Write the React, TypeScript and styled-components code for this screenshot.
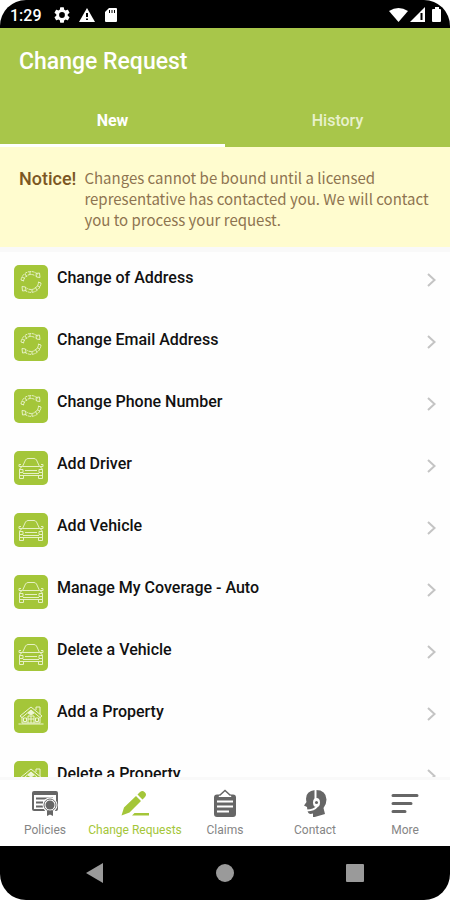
import React, { useState } from "react";
import styled, { createGlobalStyle } from "styled-components";

const green = "#a8c64a";
const iconGreen = "#a4c639";

const GlobalStyle = createGlobalStyle`
  *, *::before, *::after { box-sizing: border-box; }
  body { margin: 0; background: #fff; font-family: Roboto, "Liberation Sans", sans-serif; }
  button { font: inherit; border: 0; padding: 0; background: none; cursor: pointer; }
  a { color: inherit; text-decoration: none; }
  svg { display: block; flex: none; }
`;

const Screen = styled.div`
  display: flex;
  flex-direction: column;
  height: 100vh;
  overflow: hidden;
  border-radius: 26px;
  background: #fefefe;
`;

const StatusBar = styled.div`
  display: flex;
  align-items: center;
  justify-content: space-between;
  flex: none;
  height: 28px;
  padding: 2px 6px 0 10px;
  background: #000;
  color: #fff;
  font-size: 16px;
  font-weight: 500;
`;

const StatusGroup = styled.div<{ $gap: number }>`
  display: flex;
  align-items: center;
  gap: ${(p) => p.$gap}px;
`;

const Clock = styled.span`
  margin-right: 3px;
`;

const Header = styled.header`
  flex: none;
  background: ${green};
  color: #fff;
`;

const Title = styled.h1`
  margin: 0;
  padding: 18px 19px 0;
  font-size: 23px;
  line-height: 32px;
  font-weight: 500;
`;

const Tabs = styled.div`
  display: grid;
  grid-template-columns: 1fr 1fr;
  margin-top: 16px;
`;

const Tab = styled.button<{ $active: boolean }>`
  height: 53px;
  padding-top: 2px;
  border-bottom: 3px solid ${(p) => (p.$active ? "#fff" : green)};
  color: ${(p) => (p.$active ? "#fff" : "#e8f1cd")};
  font-size: 16px;
  font-weight: ${(p) => (p.$active ? 700 : 500)};
`;

const Notice = styled.section`
  display: flex;
  flex: none;
  gap: 8px;
  padding: 20px 19px 17px;
  background: #fffccf;
  border-bottom: 5px solid #f9f9f9;
`;

const NoticeLabel = styled.strong`
  color: #7c5723;
  font-size: 18px;
  line-height: 24px;
  font-weight: 500;
`;

const NoticeText = styled.p`
  margin: 0;
  color: #8e7450;
  font-family: "Noto Sans CJK SC", sans-serif;
  font-size: 15px;
  line-height: 21px;
`;

const List = styled.ul`
  flex: 1;
  min-height: 0;
  margin: 0;
  padding: 0;
  overflow: hidden;
  list-style: none;
`;

const Row = styled.button`
  display: flex;
  align-items: flex-start;
  width: 100%;
  height: 62px;
  padding: 13px 12px 0 14px;
  text-align: left;
`;

const Tile = styled.span`
  display: grid;
  place-items: center;
  flex: none;
  width: 34px;
  height: 34px;
  margin-right: 9px;
  border-radius: 5px;
  background: ${iconGreen};
`;

const RowLabel = styled.span`
  flex: 1;
  color: #111;
  font-size: 16px;
  line-height: 26px;
  font-weight: 500;
`;

const ChevronBox = styled.span`
  padding-top: 8px;
`;

const BottomNav = styled.nav`
  display: grid;
  grid-template-columns: repeat(5, 1fr);
  flex: none;
  height: 69px;
  border-top: 3px solid #f9f9f9;
  background: #fff;
`;

const NavItem = styled.a<{ $active: boolean }>`
  display: flex;
  flex-direction: column;
  align-items: center;
  min-width: 0;
  padding-top: 9px;
  gap: 5px;
  color: ${(p) => (p.$active ? iconGreen : "#666")};
`;

const NavLabel = styled.span<{ $active: boolean }>`
  color: ${(p) => (p.$active ? iconGreen : "#858585")};
  font-size: 12px;
  line-height: 16px;
  white-space: nowrap;
`;

const SystemBar = styled.div`
  display: flex;
  align-items: center;
  justify-content: space-around;
  flex: none;
  height: 54px;
  padding: 0 30px;
  background: #000;
`;

const SystemButton = styled.button`
  display: grid;
  place-items: center;
  width: 32px;
  height: 32px;
  color: #9a9a9a;
`;

const CycleIcon = () => (
  <svg width="26" height="26" viewBox="0 0 26 26" fill="none" stroke="#e6f1c4" strokeWidth="1">
    <path d="M3 11A10 10 0 0 1 20 5.500M5.500 12A7.500 7.500 0 0 1 17.500 7" strokeDasharray="3 .7" />
    <path d="M23 14A10 10 0 0 1 6 20.500M20.500 13A7.500 7.500 0 0 1 8.500 19" strokeDasharray="3 .7" />
    <path d="M18 4.500L21.500 4 22 8.500 18.500 8zM8 21.500L4.500 22 4 17.500 7.500 18zM3 11l3 1M23 14l-3-1M4 8l3 1.500M7 5l2 3M12 3v3M22 18l-3-1.500M19 21l-2-3M14 23v-3" />
  </svg>
);

const CarIcon = () => (
  <svg width="26" height="26" viewBox="0 0 26 26" fill="none" stroke="#e6f1c4" strokeWidth="1" strokeLinejoin="round">
    <path d="M4.500 11.500L7.500 5Q8.500 3.500 10 3.500H16Q17.500 3.500 18.500 5L21.500 11.500M3 9.500H1V11.500H4M23 9.500H25V11.500H22" />
    <path d="M4.500 11.500H21.500Q24.500 12.500 24.500 15V23.500H20.500V20.500H5.500V23.500H1.500V15Q1.500 12.500 4.500 11.500zM1.500 14.500H5V17.500H1.500M24.500 14.500H21V17.500H24.500M7 15.500H19M5 18.500H21M1.500 20.500H24.500" />
  </svg>
);

const HouseIcon = () => (
  <svg width="26" height="26" viewBox="0 0 26 26" fill="none" stroke="#edf5d5" strokeWidth="1" strokeLinejoin="round">
    <path d="M2 13L13 4 24 13 22 14.500 13 7 4 14.500zM18 7V4H22V11M4 14V20H22V14M.5 21H25.500M10 20V13H16V20" />
    <path d="M5.500 15H8.500V18.500H5.500zM17.500 15H20.500V18.500H17.500zM13 13V20M10 16H16" />
    <path d="M13 7L16 10 13 12 10 10z" fill="#edf5d5" />
  </svg>
);

const Chevron = () => (
  <svg width="12" height="14" viewBox="0 0 12 14" fill="none" stroke="#c4c4c4" strokeWidth="2">
    <path d="M2 1l6.500 6L2 13" />
  </svg>
);

const PoliciesIcon = () => (
  <svg width="28" height="28" viewBox="0 0 28 28">
    <path d="M3 2H25Q27 2 27 4V20Q27 22 25 22H24V19H25V6H3V20H15L14 22H3Q1 22 1 20V4Q1 2 3 2z" fill="currentColor" />
    <path d="M5 9.500H22M5 13.500H12M5 17.500H12" stroke="currentColor" strokeWidth="2" />
    <circle cx="19" cy="16" r="7.500" fill="#fff" />
    <circle cx="19" cy="16" r="4.500" fill="currentColor" />
    <circle cx="19" cy="16" r="6" fill="none" stroke="currentColor" strokeWidth="1" />
    <path d="M16 22V27L19 25.500 22 27V22z" fill="currentColor" />
  </svg>
);

const PencilIcon = () => (
  <svg width="28" height="28" viewBox="0 0 28 28" fill="currentColor">
    <path d="M.5 26.500L3 18.500 15 7 20 12 8.500 23.500zM16.500 5.500L19 3Q21.500 1 23.500 3L24 3.500Q26 5.500 24 8L21.500 10.500zM13.500 24H28V26.500H11z" />
  </svg>
);

const ClaimsIcon = () => (
  <svg width="28" height="28" viewBox="0 0 28 28" fill="none">
    <path d="M8.500 6.500L14 1.500 19.500 6.500" stroke="currentColor" strokeWidth="1.500" />
    <path d="M6 5.500H9L7.500 8H20.500L19 5.500H22Q25 5.500 25 8.500V25Q25 28 22 28H6Q3 28 3 25V8.500Q3 5.500 6 5.500z" fill="currentColor" />
    <path d="M6 12.500H22M6 17.500H22M6 22.500H18" stroke="#fff" strokeWidth="2" />
  </svg>
);

const ContactIcon = () => (
  <svg width="28" height="28" viewBox="0 0 28 28">
    <path d="M14 1Q25 .5 25.500 10.500 25.500 15 22.500 19L24 25 12 28.500V24.500Q7.500 26 6.500 22L6 18 3 16.500 5.500 13Q3 2.500 14 1z" fill="currentColor" />
    <path d="M14.500 1V10M16.500 17Q13 21.500 6 21.500" stroke="#fff" strokeWidth="2" fill="none" />
    <ellipse cx="15.500" cy="13.500" rx="3.500" ry="4.500" fill="#fff" />
    <circle cx="15.500" cy="13.500" r="1.500" fill="currentColor" />
  </svg>
);

const MoreIcon = () => (
  <svg width="28" height="28" viewBox="0 0 28 28" fill="none" stroke="currentColor" strokeWidth="3" strokeLinecap="round">
    <path d="M2 6.500H26M2 14.500H20M2 22.500H14" />
  </svg>
);

const kinds = { cycle: CycleIcon, car: CarIcon, house: HouseIcon };

const requests: { label: string; kind: keyof typeof kinds }[] = [
  { label: "Change of Address", kind: "cycle" },
  { label: "Change Email Address", kind: "cycle" },
  { label: "Change Phone Number", kind: "cycle" },
  { label: "Add Driver", kind: "car" },
  { label: "Add Vehicle", kind: "car" },
  { label: "Manage My Coverage - Auto", kind: "car" },
  { label: "Delete a Vehicle", kind: "car" },
  { label: "Add a Property", kind: "house" },
  { label: "Delete a Property", kind: "house" },
];

const navItems = [
  { label: "Policies", Icon: PoliciesIcon },
  { label: "Change Requests", Icon: PencilIcon },
  { label: "Claims", Icon: ClaimsIcon },
  { label: "Contact", Icon: ContactIcon },
  { label: "More", Icon: MoreIcon },
];

export default function App() {
  const [tab, setTab] = useState("New");
  return (
    <>
      <GlobalStyle />
      <Screen>
        <StatusBar>
          <StatusGroup $gap={9}>
            <Clock>1:29</Clock>
            <svg width="16" height="16" viewBox="2 2 20 20" fill="#fff">
              <path d="M19.140 12.940a7.500 7.500 0 0 0 0-1.880l2.030-1.580a.5.5 0 0 0 .12-.61l-1.920-3.320a.5.5 0 0 0-.59-.22l-2.390.96a7 7 0 0 0-1.620-.94l-.36-2.540a.5.5 0 0 0-.48-.41h-3.840a.5.5 0 0 0-.47.41l-.36 2.540a7 7 0 0 0-1.620.94l-2.390-.96a.5.5 0 0 0-.59.22L2.740 8.870a.5.5 0 0 0 .12.61l2.030 1.580a7.500 7.500 0 0 0 0 1.880l-2.030 1.580a.5.5 0 0 0-.12.61l1.920 3.320a.5.5 0 0 0 .59.22l2.390-.96a7 7 0 0 0 1.620.94l.36 2.540a.5.5 0 0 0 .48.41h3.840a.5.5 0 0 0 .47-.41l.36-2.540a7 7 0 0 0 1.620-.94l2.390.96a.5.5 0 0 0 .59-.22l1.920-3.320a.5.5 0 0 0-.12-.61zM12 15.600a3.600 3.600 0 1 1 0-7.200 3.600 3.600 0 0 1 0 7.200z" />
            </svg>
            <svg width="16" height="16" viewBox="0 0 16 16">
              <path d="M8 1L16 15H0z" fill="#fff" />
              <path d="M8 6V10M8 11.500V13" stroke="#000" strokeWidth="2" />
            </svg>
            <svg width="14" height="16" viewBox="0 0 14 16">
              <path d="M5 1H12Q13 1 13 2V14Q13 15 12 15H2Q1 15 1 14V5z" fill="#fff" />
              <path d="M5.500 3V6M8 3V6M10.500 3V6" stroke="#000" strokeWidth="1" />
            </svg>
          </StatusGroup>
          <StatusGroup $gap={2}>
            <svg width="19" height="16" viewBox="0 0 19 16">
              <path d="M0 4Q9.500-2 19 4L9.500 15z" fill="#fff" />
            </svg>
            <svg width="16" height="16" viewBox="0 0 16 16">
              <path d="M15 0V15H0z" fill="#fff" />
              <path d="M11.500 6V13" stroke="#000" strokeWidth="2" />
            </svg>
            <svg width="16" height="16" viewBox="0 0 16 16">
              <path d="M7 0H11V2H12Q13 2 13 3V14Q13 15 12 15H5Q4 15 4 14V3Q4 2 5 2H7z" fill="#fff" />
            </svg>
          </StatusGroup>
        </StatusBar>
        <Header>
          <Title>Change Request</Title>
          <Tabs role="tablist">
            {["New", "History"].map((name) => (
              <Tab key={name} role="tab" aria-selected={tab === name} $active={tab === name} onClick={() => setTab(name)}>
                {name}
              </Tab>
            ))}
          </Tabs>
        </Header>
        <Notice>
          <NoticeLabel>Notice!</NoticeLabel>
          <NoticeText>
            Changes cannot be bound until a licensed representative has contacted you. We will contact you to process
            your request.
          </NoticeText>
        </Notice>
        <List>
          {requests.map(({ label, kind }) => {
            const Icon = kinds[kind];
            return (
              <li key={label}>
                <Row>
                  <Tile>
                    <Icon />
                  </Tile>
                  <RowLabel>{label}</RowLabel>
                  <ChevronBox>
                    <Chevron />
                  </ChevronBox>
                </Row>
              </li>
            );
          })}
        </List>
        <BottomNav>
          {navItems.map(({ label, Icon }) => (
            <NavItem key={label} href="#" $active={label === "Change Requests"}>
              <Icon />
              <NavLabel $active={label === "Change Requests"}>{label}</NavLabel>
            </NavItem>
          ))}
        </BottomNav>
        <SystemBar>
          <SystemButton aria-label="Back">
            <svg width="20" height="20" viewBox="0 0 20 20" fill="currentColor">
              <path d="M18 0V20L1 10z" />
            </svg>
          </SystemButton>
          <SystemButton aria-label="Home">
            <svg width="18" height="18" viewBox="0 0 18 18" fill="currentColor">
              <circle cx="9" cy="9" r="9" />
            </svg>
          </SystemButton>
          <SystemButton aria-label="Recent apps">
            <svg width="18" height="18" viewBox="0 0 18 18" fill="currentColor">
              <rect width="18" height="18" rx="1" />
            </svg>
          </SystemButton>
        </SystemBar>
      </Screen>
    </>
  );
}
